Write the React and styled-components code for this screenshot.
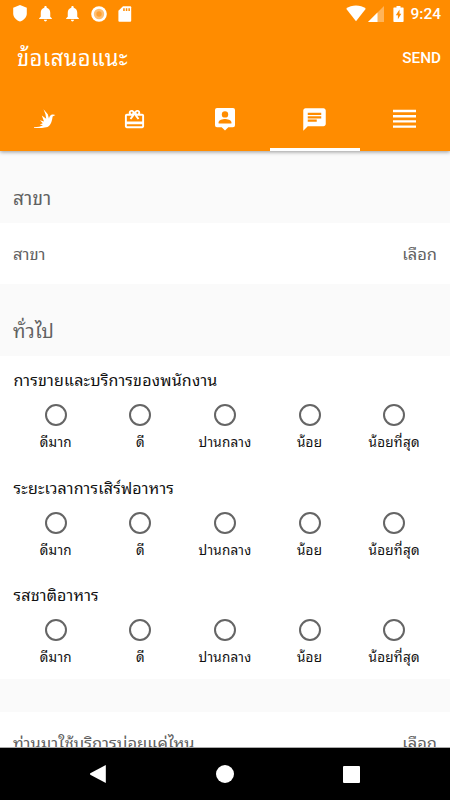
import styled, {createGlobalStyle} from "styled-components";
import {MdChat, MdNotifications, MdRedeem} from "react-icons/md";

const choices = ["ดีมาก", "ดี", "ปานกลาง", "น้อย", "น้อยที่สุด"];

const questions = [
  {id: 1, title: "การขายและบริการของพนักงาน"},
  {id: 2, title: "ระยะเวลาการเสิร์ฟอาหาร"},
  {id: 3, title: "รสชาติอาหาร"},
];

function BirdIcon() {
  return (
    <svg width="22" height="20" viewBox="0 0 22 20" fill="#fff">
      <path d="M0 18.2C4 18 7 17.600 9 16.200L5.800 15.600L8.800 14.200L5.900 11.200L10 12.600L7.800 6.600L12.200 9.800L11.400 5L9.500 .3L13.800 5.200L15 9.800C15.200 6.800 17 5.200 19 5.400L21.400 5.900L18.600 7.400C18 11.800 17 16.200 13.500 18L8 18.900L0 19Z" />
    </svg>
  );
}

function PersonIcon() {
  return (
    <svg width="20" height="23" viewBox="0 0 20 23">
      <path d="M2 0h16Q20 0 20 2v15.200q0 2-2 2H13.300L10 22.600L6.700 19.200H2Q0 19.200 0 17.200V2Q0 0 2 0z" fill="#fff" />
      <circle cx="10" cy="6.400" r="3.200" fill="#ff8c00" />
      <path d="M3.600 15.400v-1.200c0-2.200 4.200-3.300 6.400-3.300s6.400 1.100 6.400 3.300v1.200z" fill="#ff8c00" />
    </svg>
  );
}

function LinesIcon() {
  return (
    <svg width="23" height="20" viewBox="0 0 23 20" fill="#fff">
      <path d="M0 .8h23v2.400H0zM0 6h23v2.400H0zM0 11.200h23v2.400H0zM0 16.400h23v2.400H0z" />
    </svg>
  );
}

function Question({title}) {
  return (
    <StQuestion>
      <StQuestionTitle>{title}</StQuestionTitle>
      <StChoices>
        {choices.map((choice) => (
          <StChoice key={choice}>
            <StRadio type="radio" name={title} />
            <span>{choice}</span>
          </StChoice>
        ))}
      </StChoices>
    </StQuestion>
  );
}

function App() {
  return (
    <StScreen>
      <GlobalStyle />
      <StHeader>
        <StStatusBar>
          <StStatusLeft>
            <svg width="14" height="17" viewBox="0 0 14 17" fill="#fff">
              <path d="M7 0l6.800 2.700v5.500c0 3.800-2.700 7-6.800 8.300C2.900 15.200.200 12 .200 8.200V2.700z" />
            </svg>
            <MdNotifications size={19} />
            <MdNotifications size={19} />
            <svg width="16" height="16" viewBox="0 0 16 16">
              <circle cx="8" cy="8" r="7.800" fill="#fff" />
              <circle cx="8" cy="8" r="5.200" fill="#ffbf73" />
              <circle cx="8" cy="8" r="2.700" fill="#ffa133" />
            </svg>
            <svg width="14" height="16" viewBox="0 0 14 16">
              <path d="M5 .2h7.200q1 0 1 1v13.600q0 1-1 1H1.400q-1 0-1-1V4.800z" fill="#fff" />
              <path d="M5.200 2.200h1.500v2.800H5.200zM7.800 2.200h1.500v2.800H7.800zM10.400 2.200h1.500v2.800h-1.500z" fill="#ff8c00" />
            </svg>
          </StStatusLeft>
          <StStatusRight>
            <svg width="20" height="17" viewBox="0 0 20 17" fill="#fff">
              <path d="M10 16.200L.2 3.700C5.500-.7 14.500-.7 19.800 3.700z" />
            </svg>
            <svg width="16" height="16" viewBox="0 0 16 16" fill="#fff">
              <path d="M0 16L16 0v16z" opacity=".35" />
              <path d="M0 16l9.500-9.500V16z" />
            </svg>
            <svg width="11" height="16" viewBox="0 0 11 16">
              <path d="M3.500 0h4v1.500H10q.6 0 .6.600v13.200q0 .7-.7.700H1.100q-.7 0-.7-.7V2.100q0-.6.600-.6h2.500z" fill="#fff" />
              <path d="M6.500 3.500L2.800 9.300h2.100v4L8.300 7.700H6.500z" fill="#ff8c00" />
            </svg>
            <StClock>9:24</StClock>
          </StStatusRight>
        </StStatusBar>
        <StToolbar>
          <StTitle>ข้อเสนอแนะ</StTitle>
          <StSend>SEND</StSend>
        </StToolbar>
        <StTabs>
          <StTab><BirdIcon /></StTab>
          <StTab><MdRedeem size={23} /></StTab>
          <StTab><PersonIcon /></StTab>
          <StTab $active><MdChat size={27} /></StTab>
          <StTab><LinesIcon /></StTab>
        </StTabs>
      </StHeader>
      <StContent>
        <StSectionName>สาขา</StSectionName>
        <StRow>
          <span>สาขา</span>
          <span>เลือก</span>
        </StRow>
        <StSectionName>ทั่วไป</StSectionName>
        <StQuestionList>
          {questions.map((question) => (
            <Question key={question.id} title={question.title} />
          ))}
        </StQuestionList>
        <StGap />
        <StRow>
          <span>ท่านมาใช้บริการบ่อยแค่ไหน</span>
          <span>เลือก</span>
        </StRow>
      </StContent>
      <StNavBar>
        <svg width="16" height="18" viewBox="0 0 16 18" fill="#fff">
          <path d="M15.800 0v18L.3 9.700q-.6-.7 0-1.400z" />
        </svg>
        <svg width="18" height="18" viewBox="0 0 18 18" fill="#fff">
          <circle cx="9" cy="9" r="9" />
        </svg>
        <svg width="17" height="17" viewBox="0 0 17 17" fill="#fff">
          <rect width="17" height="17" rx="1" />
        </svg>
      </StNavBar>
    </StScreen>
  );
}
export default App;

const GlobalStyle = createGlobalStyle`
  * {
    box-sizing: border-box;
  }
  body {
    margin: 0;
    font-family: Roboto, "Noto Sans Thai Looped", "Noto Looped Thai", Loma, Waree, Garuda, "Droid Sans Thai", sans-serif;
  }
  svg {
    display: block;
    flex: none;
  }
`;

const StScreen = styled.div`
  display: flex;
  flex-direction: column;
  height: 800px;
  width: 450px;
  overflow: hidden;
  background-color: #fafafa;
`;
const StHeader = styled.header`
  z-index: 1;
  flex: none;
  height: 151px;
  color: #fff;
  background-color: #ff8c00;
  box-shadow: 0 1px 4px rgba(0, 0, 0, 0.4);
`;
const StStatusBar = styled.div`
  display: flex;
  justify-content: space-between;
  align-items: center;
  height: 27px;
  padding: 0 9px 0 13px;
`;
const StStatusLeft = styled.div`
  display: flex;
  align-items: center;
  gap: 10px;
  svg:nth-child(2) {
    margin: 0 -2px 0 -1px;
  }
  svg:nth-child(4) {
    margin: 0 1px 0 -1px;
  }
`;
const StStatusRight = styled.div`
  display: flex;
  align-items: center;
  svg:nth-child(2) {
    margin: 0 9px 0 2px;
  }
`;
const StClock = styled.span`
  margin-left: 6px;
  font-size: 15.5px;
  font-weight: 500;
`;
const StToolbar = styled.div`
  display: flex;
  justify-content: space-between;
  align-items: center;
  height: 61px;
  padding: 0 9px 0 17px;
`;
const StTitle = styled.h1`
  margin: 0 0 3px;
  font-size: 22px;
  font-weight: 400;
  letter-spacing: 0.4px;
`;
const StSend = styled.button`
  padding: 0;
  border: 0;
  background: none;
  color: #fff;
  font: 500 15.3px Roboto, sans-serif;
`;
const StTabs = styled.nav`
  display: grid;
  grid-template-columns: repeat(5, 1fr);
  height: 63px;
`;
const StTab = styled.div`
  display: flex;
  justify-content: center;
  align-items: center;
  padding: 2px 1px 0 0;
  border-bottom: 3px solid ${({$active}) => ($active ? "#fff" : "transparent")};
`;
const StContent = styled.main`
  flex: 1;
  min-height: 0;
  overflow: hidden;
`;
const StSectionName = styled.div`
  height: 72px;
  padding: 34px 13px 0;
  color: #616161;
  font-size: 19px;
  line-height: 28px;
  letter-spacing: 0.3px;
`;
const StRow = styled.div`
  display: flex;
  justify-content: space-between;
  align-items: center;
  height: 61px;
  padding: 0 13px 2px;
  color: #616161;
  background-color: #fff;
  font-size: 16.5px;
`;
const StQuestionList = styled.div`
  display: grid;
  grid-template-rows: repeat(3, 1fr);
  height: 323px;
  background-color: #fff;
`;
const StQuestion = styled.div`
  padding: 14px 13.5px 0;
`;
const StQuestionTitle = styled.div`
  height: 34px;
  color: #111;
  font-size: 16px;
  line-height: 22px;
  letter-spacing: 0.2px;
`;
const StChoices = styled.div`
  display: grid;
  grid-template-columns: repeat(5, 1fr);
`;
const StChoice = styled.label`
  display: flex;
  flex-direction: column;
  align-items: center;
  color: #111;
  font-size: 13.5px;
  line-height: 20px;
  letter-spacing: 0.25px;
  white-space: nowrap;
`;
const StRadio = styled.input`
  appearance: none;
  width: 22px;
  height: 22px;
  margin: 0 0 6px;
  border: 2px solid #656565;
  border-radius: 50%;
`;
const StGap = styled.div`
  height: 33px;
`;
const StNavBar = styled.footer`
  display: flex;
  flex: none;
  justify-content: space-between;
  align-items: center;
  height: 52px;
  padding: 0 90px;
  background-color: #000;
  box-shadow: 0 -1px 0 #aaa;
`;
